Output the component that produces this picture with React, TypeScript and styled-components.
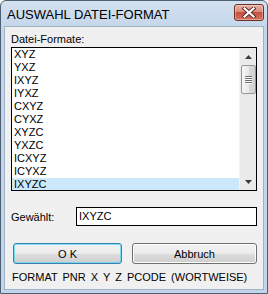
import styled, { createGlobalStyle } from "styled-components";

const GlobalStyle = createGlobalStyle`
	html, body {
		margin: 0;
		padding: 0;
		background: #ffffff;
	}
	* {
		box-sizing: border-box;
	}
`;

const Window = styled.div`
	width: 268px;
	height: 294px;
	display: flex;
	flex-direction: column;
	padding: 0 3px 3px 3px;
	border: 1px solid #4f5f72;
	border-radius: 6px 6px 0 0;
	background: linear-gradient(#d3e1f0, #c3d5ea 30px);
	font-family: "Liberation Sans", Arial, sans-serif;
	font-size: 11px;
	color: #000;
`;
const TitleBar = styled.div`
	height: 25px;
	display: flex;
	align-items: center;
	justify-content: space-between;
	padding-left: 3px;
`;
const Title = styled.span`
	font-size: 13px;
	margin-top: 1px;
`;
const CloseButton = styled.div`
	width: 30px;
	height: 17px;
	margin-top: -3px;
	border: 1px solid #6d2e25;
	border-radius: 3px;
	display: flex;
	align-items: center;
	justify-content: center;
	background: linear-gradient(#eab1a4, #d98a79 45%, #c5503f 50%, #d4725e);
	box-shadow: inset 0 0 0 1px rgba(255, 255, 255, 0.35);
	svg {
		width: 14px;
		height: 11px;
	}
`;
const Client = styled.div`
	flex: 1;
	display: flex;
	flex-direction: column;
	background: #f0f0f0;
	border: 1px solid #9fb1c6;
	padding: 6px 5px 0 6px;
`;
const Label = styled.div`
	line-height: 13px;
	height: 13px;
`;
const ListBox = styled.div`
	margin-top: 1px;
	width: 246px;
	height: 144px;
	border: 1px solid #000;
	background: #fff;
	display: flex;
	overflow: hidden;
`;
const Items = styled.div`
	flex: 1;
	display: flex;
	flex-direction: column;
	overflow: hidden;
`;
const Item = styled.div<{ $selected?: boolean }>`
	height: 13px;
	flex: none;
	line-height: 13px;
	padding-left: 2px;
	background: ${(p) => (p.$selected ? "#cce8fb" : "transparent")};
`;
const ScrollBar = styled.div`
	width: 17px;
	display: flex;
	flex-direction: column;
	background: #eaeaea;
	border-left: 1px solid #f3f3f3;
`;
const Arrow = styled.div`
	height: 17px;
	display: flex;
	align-items: center;
	justify-content: center;
	svg {
		width: 7px;
		height: 4px;
	}
`;
const Track = styled.div`
	flex: 1;
	display: flex;
	flex-direction: column;
`;
const Thumb = styled.div`
	margin: 0 0 0 1px;
	width: 15px;
	height: 29px;
	border: 1px solid #979797;
	border-radius: 2px;
	background: linear-gradient(90deg, #f5f5f5, #e9e9e9 50%, #d9d9d9 51%, #d2d2d2);
	display: flex;
	flex-direction: column;
	align-items: center;
	justify-content: center;
	gap: 1px;
	span {
		width: 7px;
		height: 1px;
		background: #6e6e6e;
		box-shadow: 0 1px 0 #fff;
	}
`;
const FieldRow = styled.div`
	margin-top: 16px;
	display: flex;
	align-items: center;
`;
const FieldLabel = styled.span`
	width: 65px;
`;
const TextBox = styled.div`
	width: 181px;
	height: 19px;
	border: 1px solid #000;
	background: #fff;
	padding-left: 2px;
	line-height: 17px;
`;
const ButtonRow = styled.div`
	margin-top: 17px;
	display: flex;
	gap: 10px;
	padding-left: 2px;
`;
const Button = styled.div<{ $default?: boolean; $width: number }>`
	width: ${(p) => p.$width}px;
	height: 21px;
	border: 1px solid ${(p) => (p.$default ? "#3c7fb1" : "#707070")};
	border-radius: 3px;
	display: flex;
	align-items: center;
	justify-content: center;
	background: linear-gradient(#f2f2f2, #ebebeb 50%, #dddddd 51%, #cfcfcf);
	box-shadow: inset 0 0 0 1px ${(p) => (p.$default ? "#48d6f8aa" : "#fcfcfc")};
`;
const Footer = styled.div`
	margin-top: 7px;
	padding-left: 1px;
	line-height: 13px;
	white-space: pre;
	word-spacing: 2px;
`;

const formats = [
	"XYZ", "YXZ", "IXYZ", "IYXZ", "CXYZ", "CYXZ",
	"XYZC", "YXZC", "ICXYZ", "ICYXZ", "IXYZC",
];

export default function App() {
	const selected = "IXYZC";
	return <>
		<GlobalStyle />
		<Window>
			<TitleBar>
				<Title>AUSWAHL DATEI-FORMAT</Title>
				<CloseButton>
					<svg viewBox="0 0 14 11">
						<path d="M2.5 1.5 L11.5 9.5 M11.5 1.5 L2.5 9.5" stroke="#5a2a24" strokeWidth="4" strokeLinecap="square" />
						<path d="M2.5 1.5 L11.5 9.5 M11.5 1.5 L2.5 9.5" stroke="#fff" strokeWidth="2.2" strokeLinecap="square" />
					</svg>
				</CloseButton>
			</TitleBar>
			<Client>
				<Label>Datei-Formate:</Label>
				<ListBox>
					<Items>
						{formats.map((f) => (
							<Item key={f} $selected={f === selected}>{f}</Item>
						))}
					</Items>
					<ScrollBar>
						<Arrow>
							<svg viewBox="0 0 7 4"><path d="M0 4 L3.5 0 L7 4 Z" fill="#3c3c3c" /></svg>
						</Arrow>
						<Track>
							<Thumb>
								<span /><span /><span /><span />
							</Thumb>
						</Track>
						<Arrow>
							<svg viewBox="0 0 7 4"><path d="M0 0 L7 0 L3.5 4 Z" fill="#3c3c3c" /></svg>
						</Arrow>
					</ScrollBar>
				</ListBox>
				<FieldRow>
					<FieldLabel>Gewählt:</FieldLabel>
					<TextBox>{selected}</TextBox>
				</FieldRow>
				<ButtonRow>
					<Button $default $width={109}>O K</Button>
					<Button $width={125}>Abbruch</Button>
				</ButtonRow>
				<Footer>FORMAT PNR X Y Z PCODE (WORTWEISE)</Footer>
			</Client>
		</Window>
	</>;
}
